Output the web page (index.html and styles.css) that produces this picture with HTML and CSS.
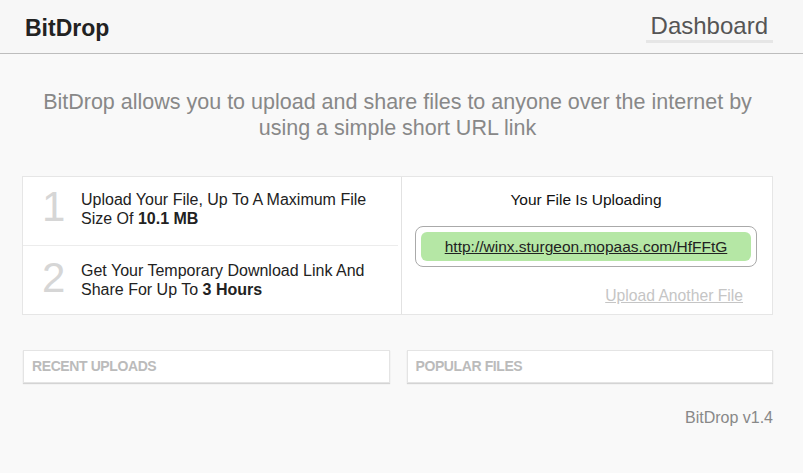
FILE: index.html
```html
<!DOCTYPE html>
<html lang="en">
    <head>
        <meta charset="UTF-8" />
        <title>BitDrop</title>
        <link rel="stylesheet" href="styles.css">
    </head>
    <body>
        <div class="header">
            <div class="brand">BitDrop</div>
            <a class="nav-link" href="#">Dashboard</a>
        </div>

        <div class="page">
            <p class="intro">
                BitDrop allows you to upload and share files to anyone over the internet by
                using a simple short URL link
            </p>

            <div class="card">
                <div class="steps">
                    <div class="step step-first">
                        <span class="step-num">1</span>
                        <span class="step-text">Upload Your File, Up To A Maximum File<br />Size Of <b>10.1 MB</b></span>
                    </div>
                    <div class="step">
                        <span class="step-num">2</span>
                        <span class="step-text">Get Your Temporary Download Link And<br />Share For Up To <b>3 Hours</b></span>
                    </div>
                </div>
                <div class="upload">
                    <div class="upload-title">Your File Is Uploading</div>
                    <div class="link-box">
                        <a class="link-pill" href="#">http://winx.sturgeon.mopaas.com/HfFFtG</a>
                    </div>
                    <div class="upload-again">
                        <a href="#">Upload Another File</a>
                    </div>
                </div>
            </div>

            <div class="panels">
                <div class="panel">RECENT UPLOADS</div>
                <div class="panel">POPULAR FILES</div>
            </div>

            <div class="footer">BitDrop v1.4</div>
        </div>
    </body>
</html>
```

FILE: styles.css
```css
body {
    margin: 0;
    font-family: "Liberation Sans", Arial, sans-serif;
    background: #f9f9f9;
    color: #222;
}
a {
    color: inherit;
}
.header {
    height: 53px;
    background: #f7f7f7;
    border-bottom: 1px solid #bdbdbd;
    display: flex;
    justify-content: space-between;
    align-items: flex-start;
    padding: 0 30px 0 25px;
}
.brand {
    font-size: 23px;
    font-weight: bold;
    color: #222;
    line-height: 28px;
    margin-top: 14px;
}
.nav-link {
    display: block;
    font-size: 24px;
    color: #555;
    text-decoration: none;
    line-height: 28px;
    padding: 0 5px;
    margin-top: 12px;
    border-bottom: 3px solid #e6e6e6;
}
.page {
    padding: 0 30px 0 22px;
}
.intro {
    margin: 35px 0 35px;
    text-align: center;
    font-size: 21.5px;
    line-height: 26px;
    color: #888;
    padding: 0 10px;
}
.card {
    display: flex;
    background: #fff;
    border: 1px solid #e6e6e6;
}
.steps {
    width: 378px;
    border-right: 1px solid #e2e2e2;
}
.step {
    display: flex;
    align-items: center;
    height: 68px;
    padding-left: 19px;
}
.step-first {
    height: 63px;
    padding-bottom: 5px;
    margin-right: 3px;
    border-bottom: 1px solid #ececec;
}
.step-num {
    flex-shrink: 0;
    width: 39px;
    font-size: 42px;
    line-height: 42px;
    color: #d6d6d6;
    margin-top: -4px;
}
.step-text {
    font-size: 16px;
    line-height: 19px;
    padding-right: 18px;
}
.upload {
    flex: 1;
    padding: 13px 15px 0 13px;
}
.upload-title {
    text-align: center;
    font-size: 15.5px;
    line-height: 19px;
    color: #111;
}
.link-box {
    margin-top: 17px;
    border: 1px solid #aaa;
    border-radius: 8px;
    padding: 5px;
}
.link-pill {
    display: block;
    background: #b5e7a5;
    border-radius: 6px;
    text-align: center;
    font-size: 15.5px;
    line-height: 29px;
    color: #222;
}
.upload-again {
    margin-top: 19px;
    text-align: right;
    padding-right: 14px;
    font-size: 15.7px;
    line-height: 19px;
    color: #c5c5c5;
}
.panels {
    display: flex;
    gap: 17px;
    margin-top: 35px;
    padding-left: 1px;
}
.panel {
    flex: 1;
    height: 31px;
    line-height: 31px;
    padding-left: 8px;
    background: #fff;
    border: 1px solid #e4e4e4;
    box-shadow: 0 1px 1px rgba(0, 0, 0, 0.15);
    font-size: 14px;
    font-weight: bold;
    letter-spacing: -0.4px;
    color: #bbb;
}
.footer {
    margin-top: 25px;
    text-align: right;
    font-size: 16px;
    line-height: 20px;
    color: #888;
}
```
